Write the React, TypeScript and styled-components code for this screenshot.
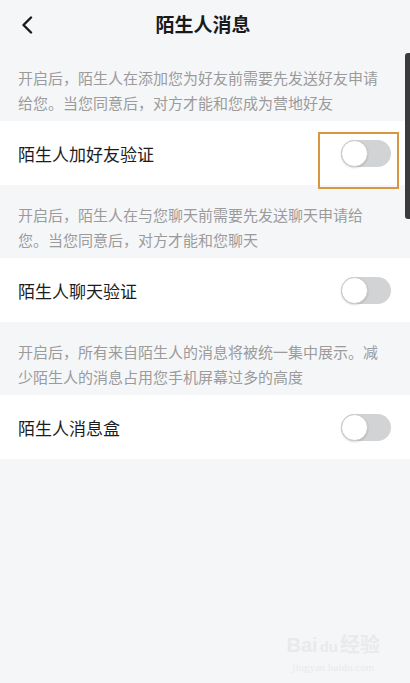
import React, {FC, useState} from 'react';
import styled, {createGlobalStyle} from 'styled-components';

const GlobalStyle = createGlobalStyle`
    html, body {
        margin: 0;
        padding: 0;
        background: #f5f6f8;
    }

    body {
        font-family: "Noto Sans CJK SC", "Noto Sans", sans-serif;
    }
`

const settings = [
    {
        desc: '开启后，陌生人在添加您为好友前需要先发送好友申请给您。当您同意后，对方才能和您成为营地好友',
        label: '陌生人加好友验证',
        marked: true,
    },
    {
        desc: '开启后，陌生人在与您聊天前需要先发送聊天申请给您。当您同意后，对方才能和您聊天',
        label: '陌生人聊天验证',
        marked: false,
    },
    {
        desc: '开启后，所有来自陌生人的消息将被统一集中展示。减少陌生人的消息占用您手机屏幕过多的高度',
        label: '陌生人消息盒',
        marked: false,
    },
];

const Toggle: FC<{ on: boolean; onClick: () => void }> = ({on, onClick}) => (
    <Track on={on} onClick={onClick}>
        <Knob on={on}/>
    </Track>
);

export default function App() {
    const [values, setValues] = useState([false, false, false]);

    return (
        <Page>
            <GlobalStyle/>
            <Header>
                <BackButton>
                    <svg width="12" height="18" viewBox="0 0 12 18" fill="none">
                        <path d="M10 1.5L2.5 9L10 16.5" stroke="#1a1a1a" strokeWidth="2.4"
                              strokeLinecap="round" strokeLinejoin="round"/>
                    </svg>
                </BackButton>
                <Title>陌生人消息</Title>
            </Header>

            {settings.map((item, i) => (
                <Section key={item.label}>
                    <Description>{item.desc}</Description>
                    <Row>
                        <Label>{item.label}</Label>
                        <Toggle on={values[i]}
                                onClick={() => setValues(v => v.map((x, j) => (j === i ? !x : x)))}/>
                        {item.marked && <Highlight/>}
                    </Row>
                </Section>
            ))}

            <ScrollThumb/>
            <Watermark>
                <WatermarkLogo>Bai<Paw>du</Paw>经验</WatermarkLogo>
                <WatermarkUrl>jingyan.baidu.com</WatermarkUrl>
            </Watermark>
        </Page>
    );
}

const Page = styled.div`
    position: relative;
    width: 410px;
    height: 683px;
    overflow: hidden;
    background: #f5f6f8;
`

const Header = styled.header`
    position: relative;
    height: 48px;
    display: flex;
    align-items: center;
    justify-content: center;
`

const BackButton = styled.button`
    position: absolute;
    left: 17px;
    top: 15px;
    width: 20px;
    height: 20px;
    padding: 0;
    border: none;
    background: none;
    display: flex;
    align-items: center;
    justify-content: center;
`

const Title = styled.h1`
    margin: 0 4px 0 0;
    font-size: 19px;
    font-weight: 700;
    color: #1a1a1a;
    line-height: 26px;
`

const Section = styled.section`
    display: flex;
    flex-direction: column;
`

const Description = styled.p`
    margin: 0;
    padding: 17px 18px 6px;
    font-size: 15px;
    line-height: 25px;
    color: #9b9b9b;
`

const Row = styled.div`
    position: relative;
    height: 64px;
    padding: 0 19px 0 18px;
    background: #ffffff;
    display: flex;
    align-items: center;
    justify-content: space-between;
`

const Label = styled.span`
    font-size: 17px;
    color: #1c1c1c;
`

const Track = styled.div<{ on: boolean }>`
    position: relative;
    width: 50px;
    height: 27px;
    border-radius: 14px;
    background: ${p => (p.on ? '#ffb020' : '#d2d3d5')};
    cursor: pointer;
    transition: background .2s;
`

const Knob = styled.span<{ on: boolean }>`
    position: absolute;
    top: 0;
    left: ${p => (p.on ? '23px' : '0')};
    width: 27px;
    height: 27px;
    box-sizing: border-box;
    border-radius: 50%;
    background: #ffffff;
    border: 1px solid #c9c9c9;
    box-shadow: 0 1px 2px rgba(0, 0, 0, .15);
    transition: left .2s;
`

const Highlight = styled.div`
    position: absolute;
    top: 11px;
    right: 11px;
    width: 81px;
    height: 57px;
    box-sizing: border-box;
    border: 2px solid #d8973f;
    pointer-events: none;
`

const ScrollThumb = styled.div`
    position: absolute;
    top: 53px;
    right: 0;
    width: 5px;
    height: 166px;
    border-radius: 3px 0 0 3px;
    background: #3b3b3d;
`

const Watermark = styled.div`
    position: absolute;
    right: 30px;
    bottom: 9px;
    display: flex;
    flex-direction: column;
    align-items: center;
    color: #e8eaec;
    pointer-events: none;
`

const WatermarkLogo = styled.div`
    font-family: "Liberation Sans", "Noto Sans CJK SC", sans-serif;
    font-size: 20px;
    font-weight: 700;
    line-height: 26px;
`

const Paw = styled.span`
    font-size: 15px;
    margin: 0 2px;
`

const WatermarkUrl = styled.div`
    font-family: "Liberation Serif", serif;
    font-size: 11px;
    line-height: 14px;
`
